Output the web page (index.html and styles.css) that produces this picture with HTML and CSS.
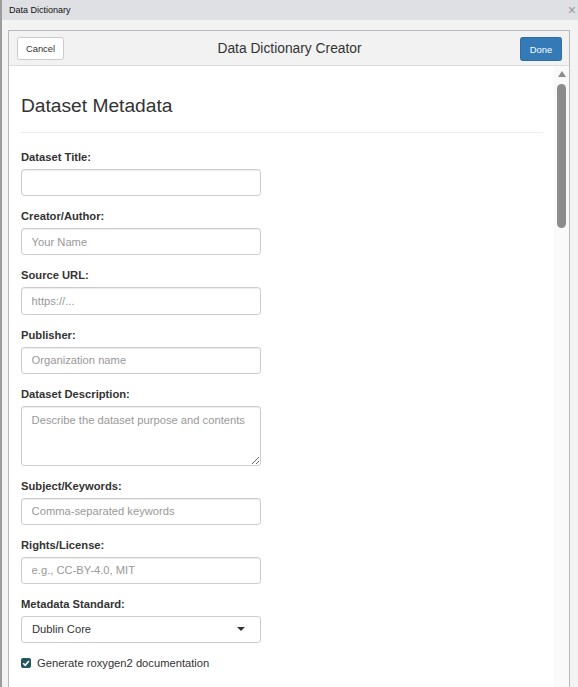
FILE: index.html
```html
<!DOCTYPE html>
<html>
<head>
<meta charset="utf-8">
<link rel="stylesheet" href="styles.css">
</head>
<body>
<div class="window">
  <div class="titlebar">
    <span class="titlebar-text">Data Dictionary</span>
    <span class="close">×</span>
  </div>
  <div class="window-body">
    <div class="frame">
      <div class="header">
        <button class="btn btn-default">Cancel</button>
        <div class="header-title">Data Dictionary Creator</div>
        <button class="btn btn-primary">Done</button>
      </div>
      <div class="main">
        <div class="content">
          <h3 class="section-title">Dataset Metadata</h3>
          <hr class="rule">
          <div class="form-group">
            <label class="control-label">Dataset Title:</label>
            <input class="form-control" type="text">
          </div>
          <div class="form-group">
            <label class="control-label">Creator/Author:</label>
            <input class="form-control" type="text" placeholder="Your Name">
          </div>
          <div class="form-group">
            <label class="control-label">Source URL:</label>
            <input class="form-control" type="text" placeholder="https://...">
          </div>
          <div class="form-group">
            <label class="control-label">Publisher:</label>
            <input class="form-control" type="text" placeholder="Organization name">
          </div>
          <div class="form-group">
            <label class="control-label">Dataset Description:</label>
            <textarea class="form-control textarea" placeholder="Describe the dataset purpose and contents"></textarea>
          </div>
          <div class="form-group">
            <label class="control-label">Subject/Keywords:</label>
            <input class="form-control" type="text" placeholder="Comma-separated keywords">
          </div>
          <div class="form-group">
            <label class="control-label">Rights/License:</label>
            <input class="form-control" type="text" placeholder="e.g., CC-BY-4.0, MIT">
          </div>
          <div class="form-group">
            <label class="control-label">Metadata Standard:</label>
            <div class="form-control select">
              <span>Dublin Core</span>
              <span class="caret"></span>
            </div>
          </div>
          <div class="checkbox">
            <span class="check-box">
              <svg viewBox="0 0 10 10" width="10" height="10"><path d="M2.2 5.2 L4.2 7.2 L7.9 2.9" fill="none" stroke="#fff" stroke-width="1.6"/></svg>
            </span>
            <span class="check-label">Generate roxygen2 documentation</span>
          </div>
        </div>
        <div class="scrollbar">
          <div class="scroll-arrow"></div>
          <div class="scroll-thumb"></div>
        </div>
      </div>
    </div>
  </div>
</div>
</body>
</html>
```

FILE: styles.css
```css
* { box-sizing: border-box; }

html, body {
  margin: 0;
  padding: 0;
  height: 687px;
  overflow: hidden;
}

body {
  font-family: "Liberation Sans", Arial, sans-serif;
  color: #333;
  background: #f3f3f3;
}

.window {
  height: 687px;
  border-left: 2px solid #9c9c9c;
  display: flex;
  flex-direction: column;
}

.titlebar {
  height: 20px;
  flex: none;
  background: #dfe0e4;
  display: flex;
  align-items: center;
  justify-content: space-between;
  padding: 0 2px 0 7px;
}

.titlebar-text {
  font-size: 9px;
  color: #111;
}

.close {
  font-size: 14px;
  color: #9a9a9a;
  line-height: 1;
}

.window-body {
  flex: 1;
  min-height: 0;
  padding: 10px 8px 0 6px;
  display: flex;
  flex-direction: column;
}

.frame {
  flex: 1;
  min-height: 0;
  border: 1px solid #b9b9b9;
  border-bottom: none;
  display: flex;
  flex-direction: column;
  background: #fff;
}

.header {
  flex: none;
  height: 35px;
  background: #f2f2f2;
  border-bottom: 1px solid #dcdcdc;
  display: grid;
  grid-template-columns: 1fr auto 1fr;
  align-items: start;
  padding: 6px 7px 0 8px;
}

.header .btn-default { justify-self: start; }
.header .btn-primary { justify-self: end; }

.header-title {
  font-size: 13.8px;
  line-height: 23px;
  color: #333;
}

.btn {
  font-family: "Liberation Sans", Arial, sans-serif;
  font-size: 9.4px;
  border-radius: 2.4px;
  border: 1px solid;
  cursor: pointer;
  padding: 0;
}

.btn-default {
  width: 47px;
  height: 23px;
  background: #fff;
  border-color: #ccc;
  color: #333;
}

.btn-primary {
  width: 42px;
  height: 24px;
  background: #337ab7;
  border-color: #2e6da4;
  color: #fff;
}

.main {
  flex: 1;
  min-height: 0;
  display: flex;
}

.content {
  flex: 1;
  min-width: 0;
  overflow: hidden;
  padding: 29px 11px 0 12px;
}

.section-title {
  font-size: 19.2px;
  font-weight: normal;
  line-height: 21px;
  margin: 0 0 16px 0;
  color: #333;
}

.rule {
  border: 0;
  border-top: 1px solid #eee;
  margin: 0 0 16px 0;
}

.form-group {
  margin-bottom: 12px;
}

.control-label {
  display: block;
  font-size: 11.2px;
  font-weight: bold;
  line-height: 16px;
  margin-bottom: 4px;
  color: #333;
}

.form-control {
  display: block;
  width: 240px;
  height: 27.2px;
  padding: 4.8px 9.6px;
  font-family: "Liberation Sans", Arial, sans-serif;
  font-size: 11.2px;
  line-height: 16px;
  color: #555;
  background: #fff;
  border: 1px solid #ccc;
  border-radius: 3.2px;
  box-shadow: inset 0 1px 1px rgba(0, 0, 0, 0.075);
  margin: 0;
}

.form-control::placeholder {
  color: #999;
}

.textarea {
  height: 59.8px;
  resize: vertical;
}

.select {
  display: flex;
  align-items: center;
  justify-content: space-between;
  padding: 0 15px 0 10px;
  color: #333;
  box-shadow: none;
  height: 26.8px;
}

.caret {
  width: 0;
  height: 0;
  border-top: 4.5px solid #333;
  border-left: 4px solid transparent;
  border-right: 4px solid transparent;
}

.checkbox {
  display: flex;
  align-items: center;
  gap: 6px;
  height: 16px;
  margin-top: 0;
}

.check-box {
  width: 10px;
  height: 10px;
  border-radius: 2px;
  background: #21575f;
  display: flex;
}

.check-label {
  font-size: 11.2px;
  color: #333;
}

.scrollbar {
  flex: none;
  width: 15px;
  background: #fafafa;
  display: flex;
  flex-direction: column;
  align-items: center;
  padding-top: 5px;
}

.scroll-arrow {
  width: 0;
  height: 0;
  border-bottom: 6px solid #8c8c8c;
  border-left: 4.5px solid transparent;
  border-right: 4.5px solid transparent;
}

.scroll-thumb {
  margin-top: 7px;
  width: 9px;
  height: 144px;
  border-radius: 5px;
  background: #8c8c8c;
}
```
